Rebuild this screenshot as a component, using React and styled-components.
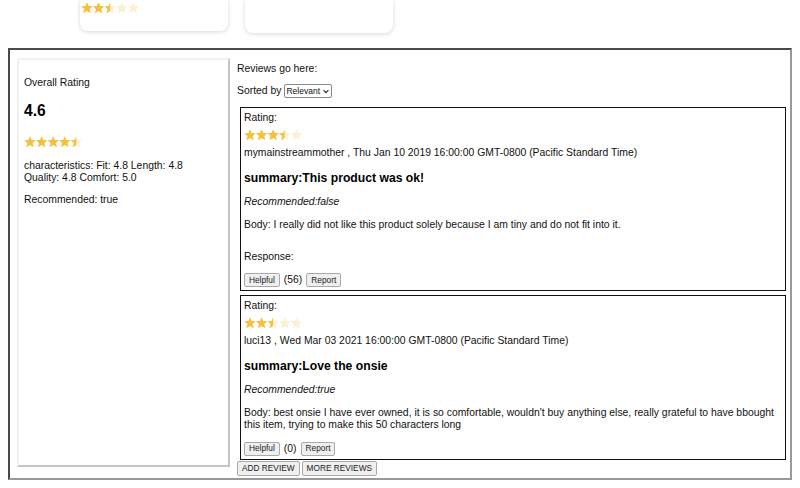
import React, { useId } from "react";
import styled, { createGlobalStyle } from "styled-components";

const GlobalStyle = createGlobalStyle`
  html, body {
    margin: 0;
    padding: 0;
    background: #fff;
  }
  body {
    font-family: "Liberation Sans", Arial, sans-serif;
    color: #111;
    overflow: hidden;
  }
`;

const STAR =
  "6,0.2 7.6,4 11.8,4.3 8.6,7 9.7,11.3 6,9 2.3,11.3 3.4,7 0.2,4.3 4.4,4";

function Stars({ value }) {
  const id = useId().replace(/:/g, "");
  return (
    <StarRow width="58" height="12" viewBox="0 0 58 12">
      <defs>
        <clipPath id={`fill${id}`}>
          <rect x="0" y="0" width={value * 11.6} height="12" />
        </clipPath>
      </defs>
      {[0, 1, 2, 3, 4].map((i) => (
        <polygon
          key={`e${i}`}
          points={STAR}
          transform={`translate(${i * 11.6} 0)`}
          fill="#fcf0d2"
        />
      ))}
      <g clipPath={`url(#fill${id})`}>
        {[0, 1, 2, 3, 4].map((i) => (
          <polygon
            key={`f${i}`}
            points={STAR}
            transform={`translate(${i * 11.6} 0)`}
            fill="#f4c03e"
          />
        ))}
      </g>
    </StarRow>
  );
}

const reviews = [
  {
    rating: 3.5,
    author: "mymainstreammother",
    date: "Thu Jan 10 2019 16:00:00 GMT-0800 (Pacific Standard Time)",
    summary: "This product was ok!",
    recommend: "false",
    body: "I really did not like this product solely because I am tiny and do not fit into it.",
    response: true,
    helpful: 56,
  },
  {
    rating: 2.5,
    author: "luci13",
    date: "Wed Mar 03 2021 16:00:00 GMT-0800 (Pacific Standard Time)",
    summary: "Love the onsie",
    recommend: "true",
    body: "best onsie I have ever owned, it is so comfortable, wouldn't buy anything else, really grateful to have bbought this item, trying to make this 50 characters long",
    response: false,
    helpful: 0,
  },
];

export default function App() {
  return (
    <Page>
      <GlobalStyle />
      <TopStrip>
        <MiniCard $h={31}>
          <Stars value={2.5} />
        </MiniCard>
        <MiniCard $h={33} />
      </TopStrip>
      <Widget>
        <Summary>
          <Line $mt={17}>Overall Rating</Line>
          <Average>4.6</Average>
          <StarWrap $mt={16}>
            <Stars value={4.5} />
          </StarWrap>
          <Line $mt={12}>
            characteristics: Fit: 4.8 Length: 4.8
            <br />
            Quality: 4.8 Comfort: 5.0
          </Line>
          <Line $mt={10}>Recommended: true</Line>
        </Summary>
        <ReviewColumn>
          <Line $mt={5}>Reviews go here:</Line>
          <SortRow>
            Sorted by
            <SelectBox>
              <Select defaultValue="relevant">
                <option value="relevant">Relevant</option>
                <option value="helpful">Helpful</option>
                <option value="newest">Newest</option>
              </Select>
              <Chevron width="6" height="5" viewBox="0 0 6 5">
                <path
                  d="M0.6 1.2 L3 3.6 L5.4 1.2"
                  fill="none"
                  stroke="#222"
                  strokeWidth="1.1"
                />
              </Chevron>
            </SelectBox>
          </SortRow>
          <ReviewList>
            {reviews.map((r) => (
              <Review key={r.author}>
                <Line>Rating:</Line>
                <StarWrap $mt={5}>
                  <Stars value={r.rating} />
                </StarWrap>
                <Line $mt={6}>
                  {r.author} , {r.date}
                </Line>
                <SummaryTitle>summary:{r.summary}</SummaryTitle>
                <Italic>Recommended:{r.recommend}</Italic>
                <Body>Body: {r.body}</Body>
                {r.response && <Line $mt={20}>Response:</Line>}
                <ActionRow>
                  <Button>Helpful</Button>
                  <span>({r.helpful})</span>
                  <Button>Report</Button>
                </ActionRow>
              </Review>
            ))}
          </ReviewList>
          <FooterRow>
            <Button $big>ADD REVIEW</Button>
            <Button $big>MORE REVIEWS</Button>
          </FooterRow>
        </ReviewColumn>
      </Widget>
    </Page>
  );
}

const Page = styled.div`
  padding: 0 8px;
  width: 800px;
  height: 488px;
  box-sizing: border-box;
`;

const TopStrip = styled.div`
  display: flex;
  align-items: flex-start;
  gap: 17px;
  height: 48px;
  padding-left: 72px;
`;

const MiniCard = styled.div`
  width: 148px;
  height: ${(p) => p.$h}px;
  background: #fff;
  border-radius: 0 0 8px 8px;
  box-shadow: 0 1px 4px rgba(0, 0, 0, 0.16);
  padding: 2px 0 0 1px;
  box-sizing: border-box;
`;

const Widget = styled.div`
  display: flex;
  gap: 7px;
  width: 784px;
  height: 432px;
  box-sizing: border-box;
  border: 2px solid;
  border-color: #4a4a4a #999 #999 #4a4a4a;
  padding: 8px 4px 0 7px;
  font-size: 10.4px;
  line-height: 12px;
`;

const Summary = styled.div`
  display: flex;
  flex-direction: column;
  width: 213px;
  height: 409px;
  flex-shrink: 0;
  box-sizing: border-box;
  border: 2px solid;
  border-color: #f0f0f0 #c4c4c4 #c4c4c4 #f0f0f0;
  padding: 0 5px;
`;

const Line = styled.div`
  margin-top: ${(p) => p.$mt || 0}px;
`;

const Body = styled.div`
  margin-top: 11px;
  line-height: 12.2px;
`;

const Average = styled.div`
  margin-top: 13px;
  font-size: 15.6px;
  line-height: 18px;
  font-weight: bold;
  color: #000;
`;

const StarWrap = styled.div`
  display: flex;
  margin-top: ${(p) => p.$mt || 0}px;
  height: 12px;
`;

const StarRow = styled.svg`
  display: block;
`;

const ReviewColumn = styled.div`
  display: flex;
  flex-direction: column;
  flex: 1;
  min-width: 0;
`;

const SortRow = styled.div`
  display: flex;
  align-items: center;
  gap: 3px;
  margin-top: 8px;
  height: 16px;
`;

const SelectBox = styled.div`
  display: flex;
  align-items: center;
  gap: 1px;
  width: 48px;
  height: 14px;
  box-sizing: border-box;
  padding: 0 2px 0 1px;
  border: 1px solid #8a8a8a;
  border-radius: 2px;
  background: #fff;
`;

const Select = styled.select`
  appearance: none;
  -webkit-appearance: none;
  font-family: "Liberation Sans", Arial, sans-serif;
  font-size: 8.5px;
  flex: 1;
  min-width: 0;
  height: 12px;
  padding: 0;
  margin: 0;
  border: none;
  outline: none;
  background: transparent;
  color: #111;
`;

const Chevron = styled.svg`
  display: block;
  flex-shrink: 0;
  pointer-events: none;
`;

const ReviewList = styled.div`
  display: flex;
  flex-direction: column;
  gap: 4px;
  margin: 8px 0 0 3px;
`;

const Review = styled.div`
  display: flex;
  flex-direction: column;
  border: 1px solid #111;
  padding: 4px 4px 3px 3px;
`;

const SummaryTitle = styled.div`
  margin-top: 12px;
  font-size: 12.2px;
  line-height: 14px;
  font-weight: bold;
  color: #000;
`;

const Italic = styled.div`
  margin-top: 11px;
  font-style: italic;
`;

const ActionRow = styled.div`
  display: flex;
  align-items: center;
  gap: 4px;
  margin-top: 10px;
`;

const Button = styled.button`
  font-family: "Liberation Sans", Arial, sans-serif;
  font-size: 8.3px;
  height: ${(p) => (p.$big ? "15px" : "14px")};
  padding: 0 4px;
  background: #efefef;
  border: 1px solid #a9a9a9;
  border-radius: 2px;
  color: #222;
  line-height: 1;
`;

const FooterRow = styled.div`
  display: flex;
  gap: 2px;
  margin-top: 1px;
`;
